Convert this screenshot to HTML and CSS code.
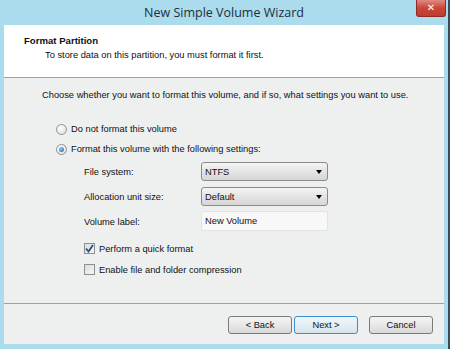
FILE: index.html
```html
<!DOCTYPE html>
<html lang="en">

<head>
    <meta charset="UTF-8">
    <title>New Simple Volume Wizard</title>
    <link rel="stylesheet" href="styles.css">
</head>

<body>
    <div class="window">
        <div class="titlebar">
            <span></span>
            <div class="title">New Simple Volume Wizard</div>
            <div class="close">&#x2715;</div>
        </div>

        <div class="client">
            <div class="header">
                <div class="header-title">Format Partition</div>
                <div class="header-sub">To store data on this partition, you must format it first.</div>
            </div>

            <div class="content">
                <div class="intro">Choose whether you want to format this volume, and if so, what settings you want to use.</div>

                <div class="options">
                    <div class="option">
                        <span class="radio"></span>
                        <span>Do not format this volume</span>
                    </div>
                    <div class="option">
                        <span class="radio checked"></span>
                        <span>Format this volume with the following settings:</span>
                    </div>
                </div>

                <div class="settings">
                    <div class="field">File system:</div>
                    <div class="select">NTFS<span class="arrow"></span></div>

                    <div class="field">Allocation unit size:</div>
                    <div class="select">Default<span class="arrow"></span></div>

                    <div class="field">Volume label:</div>
                    <div class="textbox">New Volume</div>
                </div>

                <div class="checks">
                    <div class="check-row">
                        <span class="checkbox">
                            <svg width="9" height="9" viewBox="0 0 9 9">
                                <path d="M1 4.5 L3.5 7.5 L8 1" fill="none" stroke="#2d4f86" stroke-width="1.8" />
                            </svg>
                        </span>
                        <span>Perform a quick format</span>
                    </div>
                    <div class="check-row">
                        <span class="checkbox"></span>
                        <span>Enable file and folder compression</span>
                    </div>
                </div>
            </div>

            <div class="footer">
                <div class="btn">&lt; Back</div>
                <div class="btn default">Next &gt;</div>
                <div class="btn cancel">Cancel</div>
            </div>
        </div>
    </div>
</body>

</html>
```

FILE: styles.css
```css
body {
    margin: 0;
    font-family: 'Liberation Sans', Arial, sans-serif;
    font-size: 9.3px;
    color: #111;
    background-color: #aadcee;
}

.window {
    height: 349px;
    box-sizing: border-box;
    display: flex;
    flex-direction: column;
    border-right: 2px solid #3b4b52;
}

.titlebar {
    height: 25px;
    display: grid;
    grid-template-columns: 1fr auto 1fr;
    align-items: start;
}

.title {
    font-family: 'Open Sans', 'Noto Sans', sans-serif;
    font-size: 12.5px;
    line-height: 25px;
    color: #1c2f3c;
}

.close {
    justify-self: end;
    width: 30px;
    height: 17px;
    margin-right: 2px;
    box-sizing: border-box;
    border: 1px solid #8f2b22;
    border-top: none;
    border-radius: 0 0 3px 3px;
    background: linear-gradient(#e08a80, #c9463a 50%, #c13c2f);
    color: #fff;
    font-family: 'DejaVu Sans', sans-serif;
    font-size: 10px;
    font-weight: bold;
    text-align: center;
    line-height: 15px;
}

.client {
    flex: 1;
    margin: 0 4px 5px 4px;
    display: flex;
    flex-direction: column;
    background-color: #eef0ef;
}

.header {
    height: 53px;
    box-sizing: border-box;
    padding: 9px 0 0 20px;
    background-color: #fff;
    border-bottom: 1px solid #a0a0a0;
    line-height: 14px;
}

.header-title {
    font-weight: bold;
    font-size: 9.6px;
}

.header-sub {
    margin-left: 21px;
}

.content {
    flex: 1;
    padding: 10px 0 0 38px;
    line-height: 14px;
}

.options {
    margin: 17px 0 0 14px;
}

.option {
    height: 20px;
    display: flex;
    align-items: center;
    gap: 4px;
}

.radio {
    width: 11px;
    height: 11px;
    box-sizing: border-box;
    border-radius: 50%;
    border: 1px solid #8d9092;
    background: radial-gradient(circle at 40% 35%, #ffffff, #d9dadb);
    display: flex;
    align-items: center;
    justify-content: center;
}

.radio.checked::after {
    content: "";
    width: 5px;
    height: 5px;
    border-radius: 50%;
    background: radial-gradient(circle at 40% 35%, #8cc8f2, #1d5fa8);
}

.settings {
    margin: 3px 0 0 42px;
    display: grid;
    grid-template-columns: 117px 127px;
    grid-template-rows: 19px 19px 20px;
    row-gap: 6px;
    align-items: center;
}

.settings .textbox {
    margin-top: -2px;
}

.select {
    height: 19px;
    box-sizing: border-box;
    border: 1px solid #8b8b8b;
    border-radius: 3px;
    background: linear-gradient(#f4f4f4, #e4e4e4 50%, #d6d6d6);
    padding-left: 3px;
    display: flex;
    align-items: center;
    justify-content: space-between;
}

.arrow {
    width: 0;
    height: 0;
    margin-right: 5px;
    border-left: 3.5px solid transparent;
    border-right: 3.5px solid transparent;
    border-top: 4px solid #000;
}

.textbox {
    height: 20px;
    box-sizing: border-box;
    border: 1px solid #e2e3e3;
    border-radius: 2px;
    background-color: #f8f8f8;
    padding-left: 3px;
    display: flex;
    align-items: center;
}

.checks {
    margin: 6px 0 0 42px;
}

.check-row {
    height: 21px;
    display: flex;
    align-items: center;
    gap: 4px;
}

.checkbox {
    width: 11px;
    height: 11px;
    box-sizing: border-box;
    border: 1px solid #8d9092;
    background: linear-gradient(135deg, #dcdcdc, #f6f6f6);
    display: flex;
    align-items: center;
    justify-content: center;
}

.footer {
    height: 41px;
    box-sizing: border-box;
    border-top: 1px solid #a0a0a0;
    padding: 12px 11px 0 0;
    display: flex;
    justify-content: flex-end;
    align-items: flex-start;
    gap: 2px;
}

.btn {
    width: 64px;
    height: 18px;
    box-sizing: border-box;
    border: 1px solid #7a7a7a;
    border-radius: 3px;
    background: linear-gradient(#f4f4f4, #e8e8e8 50%, #d8d8d8);
    text-align: center;
    line-height: 16px;
}

.btn.default {
    border-color: #3c8fcf;
    background: linear-gradient(#f0f6fa, #e4eef4 50%, #d6e2ea);
}

.btn.cancel {
    margin-left: 9px;
}
```
